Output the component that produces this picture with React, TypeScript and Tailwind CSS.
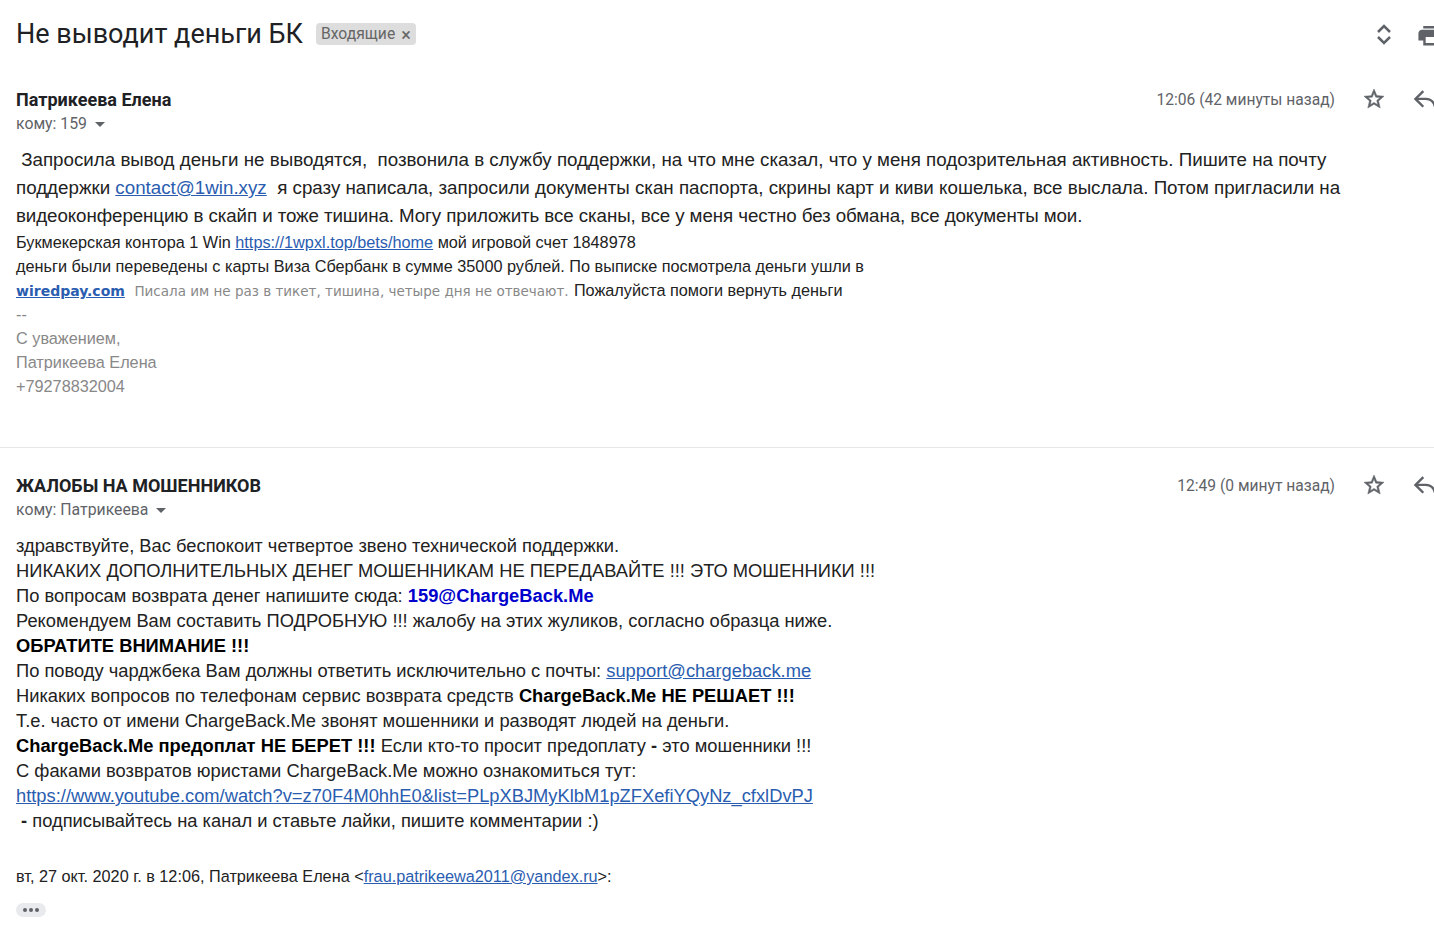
import React from 'react';

const arial = "font-['Liberation_Sans',Arial,sans-serif]";
const roboto = "font-['Roboto',sans-serif]";
const linkCls = 'text-[#2a5db0] underline';

const Star = () => (
    <svg width="24" height="24" viewBox="0 0 24 24" className="fill-[#5f6368] stroke-[#5f6368] stroke-[0.5] shrink-0">
        <path d="M22 9.24l-7.19-.62L12 2 9.19 8.63 2 9.24l5.46 4.73L5.82 21 12 17.27 18.18 21l-1.63-7.03L22 9.24zM12 15.4l-3.76 2.27 1-4.28-3.32-2.88 4.38-.38L12 6.1l1.71 4.04 4.38.38-3.32 2.88 1 4.28L12 15.4z" />
    </svg>
);

const Reply = () => (
    <svg width="29" height="29" viewBox="0 0 24 24" fill="none" stroke="#5f6368" strokeWidth="2" className="shrink-0">
        <path d="M11 5l-6.500 6.500 6.500 6.500" />
        <path d="M5 11.500h8c4 0 7 2.500 8 7.500" />
    </svg>
);

const Caret = () => <span className="ml-[8px] mt-[1px] h-0 w-0 border-x-[5px] border-t-[5px] border-x-transparent border-t-[#5f6368]" />;

const MessageHeader = ({ from, to, time, top }: { from: string; to: string; time: string; top: string }) => (
    <div className={`flex items-start justify-between ${top}`}>
        <div>
            <div className={`${roboto} text-[18px] leading-[24px] font-bold text-[#202124]`}>{from}</div>
            <div className={`${roboto} mt-[2px] flex items-center text-[15.8px] leading-[20px] text-[#5f6368]`}>
                кому: {to}
                <Caret />
            </div>
        </div>
        <div className="flex h-[22px] items-center">
            <span className={`${roboto} mt-[3px] text-[15.6px] text-[#5f6368]`}>{time}</span>
            <div className="ml-[27px] mr-[-5px] flex items-center gap-[24px]">
                <Star />
                <Reply />
            </div>
        </div>
    </div>
);

export default function App() {
    return (
        <main className="h-[929px] w-[1434px] overflow-hidden bg-white pl-[16px]">
            <div className="flex h-[68px] items-center justify-between">
                <div className="flex items-center">
                    <h1 className={`${roboto} text-[27px] font-normal text-[#202124]`}>Не выводит деньги БК</h1>
                    <span className={`${roboto} ml-[13px] flex h-[22px] items-center rounded-[4px] bg-[#dddddd] pl-[5px] pr-[5px] text-[15.7px] text-[#666666]`}>
                        Входящие <span className="ml-[6px] text-[18px]">×</span>
                    </span>
                </div>
                <div className="mr-[-11px] flex items-center gap-[20px]">
                    <svg width="24" height="24" viewBox="0 0 24 24" fill="none" stroke="#5f6368" strokeWidth="2.5">
                        <path d="M6 10l6-6 6 6M6 15l6 6 6-6" />
                    </svg>
                    <svg width="29" height="29" viewBox="0 0 24 24" className="fill-[#5f6368]">
                        <path d="M19 8H5c-1.66 0-3 1.34-3 3v6h4v4h12v-4h4v-6c0-1.66-1.34-3-3-3zm-3 11H8v-5h8v5zm2-14H6v2h12V5z" />
                    </svg>
                </div>
            </div>

            <MessageHeader from="Патрикеева Елена" to="159" time="12:06 (42 минуты назад)" top="pt-[20px]" />

            <div className={`${arial} mt-[12px] text-[18.75px] leading-[28px] text-[#222222]`}>
                <div className="whitespace-pre">
                    {' Запросила вывод деньги не выводятся,  позвонила в службу поддержки, на что мне сказал, что у меня подозрительная активность. Пишите на почту'}
                </div>
                <div className="whitespace-pre">
                    поддержки <a className={linkCls}>contact@1win.xyz</a>
                    {'  я сразу написала, запросили документы скан паспорта, скрины карт и киви кошелька, все выслала. Потом пригласили на'}
                </div>
                <div className="tracking-[-0.09px]">видеоконференцию в скайп и тоже тишина. Могу приложить все сканы, все у меня честно без обмана, все документы мои.</div>
            </div>

            <div className={`${arial} text-[16.25px] leading-[24px] text-[#222222]`}>
                <div>
                    Букмекерская контора 1 Win <a className={linkCls}>https://1wpxl.top/bets/home</a> мой игровой счет 1848978
                </div>
                <div>деньги были переведены с карты Виза Сбербанк в сумме 35000 рублей. По выписке посмотрела деньги ушли в</div>
                <div className="h-[24px] whitespace-pre">
                    <a className={`${linkCls} mr-[1px] font-['DejaVu_Sans',sans-serif] text-[14px] font-bold`}>wiredpay.com</a>
                    <span className="font-['DejaVu_Sans',sans-serif] text-[13.5px] text-[#888888]">{'  Писала им не раз в тикет, тишина, четыре дня не отвечают. '}</span>
                    <span className="ml-[1px]">Пожалуйста помоги вернуть деньги</span>
                </div>
                <div className="text-[#888888]">
                    <div>--</div>
                    <div>С уважением,</div>
                    <div>Патрикеева Елена</div>
                    <div>+79278832004</div>
                </div>
            </div>

            <div className="ml-[-16px] mt-[49px] border-t border-[#e6e6e6]" />

            <MessageHeader from="ЖАЛОБЫ НА МОШЕННИКОВ" to="Патрикеева" time="12:49 (0 минут назад)" top="pt-[26px]" />

            <div className={`${arial} mt-[13px] text-[18.32px] leading-[25px] text-[#222222]`}>
                <div>здравствуйте, Вас беспокоит четвертое звено технической поддержки.</div>
                <div>НИКАКИХ ДОПОЛНИТЕЛЬНЫХ ДЕНЕГ МОШЕННИКАМ НЕ ПЕРЕДАВАЙТЕ !!! ЭТО МОШЕННИКИ !!!</div>
                <div>
                    По вопросам возврата денег напишите сюда: <b className="text-[#0000cc]">159@ChargeBack.Me</b>
                </div>
                <div>Рекомендуем Вам составить ПОДРОБНУЮ !!! жалобу на этих жуликов, согласно образца ниже.</div>
                <div className="font-bold text-black">ОБРАТИТЕ ВНИМАНИЕ !!!</div>
                <div>
                    По поводу чарджбека Вам должны ответить исключительно с почты: <a className={linkCls}>support@chargeback.me</a>
                </div>
                <div>
                    Никаких вопросов по телефонам сервис возврата средств <b className="text-black">ChargeBack.Me НЕ РЕШАЕТ !!!</b>
                </div>
                <div>Т.е. часто от имени ChargeBack.Me звонят мошенники и разводят людей на деньги.</div>
                <div>
                    <b className="text-black">ChargeBack.Me предоплат НЕ БЕРЕТ !!!</b> Если кто-то просит предоплату <b>-</b> это мошенники !!!
                </div>
                <div>С факами возвратов юристами ChargeBack.Me можно ознакомиться тут:</div>
                <div>
                    <a className={linkCls}>https://www.youtube.com/watch?v=z70F4M0hhE0&amp;list=PLpXBJMyKlbM1pZFXefiYQyNz_cfxlDvPJ</a>
                </div>
                <div className="whitespace-pre">
                    {' '}<b>-</b> подписывайтесь на канал и ставьте лайки, пишите комментарии :)
                </div>
            </div>

            <div className={`${arial} mt-[31px] text-[16.25px] leading-[24px] text-[#222222]`}>
                вт, 27 окт. 2020 г. в 12:06, Патрикеева Елена &lt;<a className={linkCls}>frau.patrikeewa2011@yandex.ru</a>&gt;:
            </div>

            <div className="mt-[15px] flex h-[14px] w-[30px] items-center justify-center gap-[2px] rounded-full bg-[#e8eaed]">
                <span className="h-[4px] w-[4px] rounded-full bg-[#5f6368]" />
                <span className="h-[4px] w-[4px] rounded-full bg-[#5f6368]" />
                <span className="h-[4px] w-[4px] rounded-full bg-[#5f6368]" />
            </div>
        </main>
    );
}
